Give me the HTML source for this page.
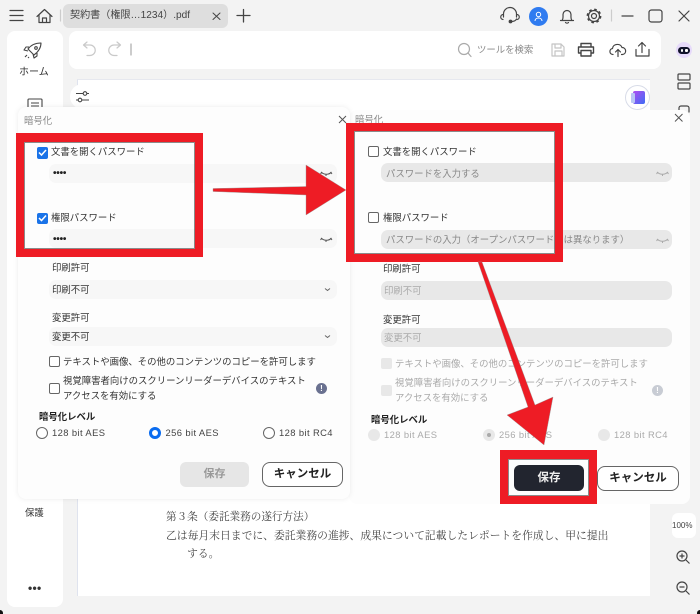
<!DOCTYPE html>
<html lang="ja"><head><meta charset="utf-8"><style>
html,body{margin:0;padding:0}
body{width:700px;height:614px;position:relative;overflow:hidden;background:#f3f3f3;font-family:"Liberation Sans","Noto Sans CJK JP",sans-serif;color:#333}
.a,.t,.b{position:absolute}
.t{font-size:9.4px;line-height:14px;white-space:nowrap;margin-top:1px}
.b{box-sizing:border-box}
.in{position:absolute;border-radius:7px;height:19px}
.l{background:#f7f7f7}.r{background:#e8e8e8}
.cb{position:absolute;box-sizing:border-box;width:11px;height:11px;border:1px solid #666;border-radius:2px;background:#fff}
.ck{background:#1a73e8;border:0;width:11.5px;height:11.5px}
.ser{font-family:"Liberation Serif","Noto Serif CJK SC",serif;font-size:10.8px;color:#444}
.inf{color:#fff;font-size:8px;font-weight:700;text-align:center;line-height:11px}
.frame{border-color:#ee1c25;border-style:solid;box-shadow:inset 0 0 0 1px rgba(90,90,90,.7)}
svg{position:absolute;overflow:visible}
</style></head><body>
<!-- background panels -->
<div class="b" style="left:7px;top:31px;width:56px;height:576px;background:#fff;border-radius:8px"></div>
<div class="b" style="left:69px;top:31px;width:592px;height:38px;background:#fff;border-radius:8px"></div>
<div class="b" style="left:77px;top:79px;width:573px;height:517px;background:#fff;border-left:1px solid #dfe3ee;border-top:1px solid #e6e8ef"></div>
<div class="b" style="left:672px;top:513px;width:24px;height:25px;background:#fff;border-radius:6px"></div>
<div class="b" style="left:63px;top:4px;width:165px;height:24px;background:#dedede;border-radius:6px"></div>

<!-- top bar -->
<svg style="left:0;top:0" width="700" height="115" fill="none" stroke="#444" stroke-width="1.2" stroke-linecap="round" stroke-linejoin="round">
<path d="M10 10.500H23M10 15.500H23M10 20.500H23"/>
<path d="M37 16.500 44.500 9.500 52 16.500M39 15v7.500H50V15M42.500 22.500v-4.500h4v4.500"/>
<path d="M60.500 10v11" stroke="#ccc"/>
<path d="M213 13l7 6.500M220 13l-7 6.500" stroke-width="1"/>
<path d="M243.500 9.500v12.500M237 15.500h13" stroke-width="1.300"/>
<path d="M503.500 17v-3a6.500 6.500 0 0 1 13 0v3M503.500 14.500a2.500 2.500 0 0 0-.5 5M516.500 14.500a2.500 2.500 0 0 1 .5 5M516.500 19c-1 2-3 2.500-5 2.500"/>
<circle cx="510.500" cy="21.500" r="1.300" fill="#444"/>
<path d="M560.500 20.500h13M562 20.500c1.500-2 1-4 1-6a4 4 0 0 1 8 0c0 2-.5 4 1 6M565.500 22.500a2 2 0 0 0 3 0"/>
<circle cx="594" cy="16" r="2.500"/><circle cx="594" cy="16" r="5.500"/><circle cx="594" cy="16" r="6.500" stroke-width="1.800" stroke-dasharray="2.550 2.550" stroke-linecap="butt"/>
<path d="M611.500 10v11" stroke="#ccc"/>
<path d="M622 16h11"/>
<rect x="649" y="10" width="13" height="12" rx="2.500"/>
<path d="M679 11l10 10M689 11l-10 10"/>
<!-- toolbar -->
<path d="M84 45h6a4.500 4.500 0 0 1 0 10.500h-3M87 42l-3.500 3 3.500 3" stroke="#c9c9c9"/>
<path d="M120 45h-6a4.500 4.500 0 0 0 0 10.500h3M117 42l3.500 3-3.500 3" stroke="#c9c9c9"/>
<path d="M131 44v11" stroke="#aaa"/>
<circle cx="464" cy="49" r="5.500" stroke="#aaa"/><path d="M468 53l3 3.500" stroke="#aaa"/>
<path d="M552 44h9l3 3v9h-12zM555 44v4h6v-4M555 56v-5h7v5" stroke="#c4c4c4"/>
<path d="M581 47v-3.500h10V47M581 53h-2.500v-6h15v6H591M581 50.500h10v5.500h-10z" stroke-width="1.400"/>
<path d="M613 54.500c-4 0-4-5.500-.5-6 .5-5 8-5.500 9.500-1 4.500 0 5 6.500.5 7h-1M618 56.500v-7M615.500 52l2.500-2.500 2.500 2.500"/>
<path d="M642 42.500v10M638.500 46l3.500-3.500 3.500 3.500M636 49.500v6.500h13v-6.500"/>
<rect x="678" y="74" width="12" height="6" rx="1"/><rect x="678" y="83" width="12" height="6" rx="1"/>
<path d="M679 112v-4a2 2 0 0 1 2-2h6a2 2 0 0 1 2 2v4"/>
</svg>
<div class="t" style="left:70px;top:8px;font-size:10.100px;color:#444">契約書（権限…1234）.pdf</div>
<div class="b" style="left:529px;top:7px;width:19px;height:19px;border-radius:50%;background:#2f7bf0"></div>
<svg style="left:529px;top:7px" width="19" height="19" fill="none" stroke="#fff" stroke-width="1"><circle cx="9.500" cy="7.500" r="2.200"/><path d="M6 14c0-4 7-4 7 0"/></svg>
<div class="t" style="left:477px;top:42px;color:#888">ツールを検索</div>
<div class="b" style="left:676px;top:42px;width:16px;height:16px;border-radius:50%;background:#e6dafa"></div>
<div class="b" style="left:678px;top:46.500px;width:12px;height:7px;border-radius:3.500px;background:#10122a"></div>
<div class="b" style="left:680.500px;top:48.500px;width:2.500px;height:3px;border-radius:1px;background:#fff"></div>
<div class="b" style="left:685px;top:48.500px;width:2.500px;height:3px;border-radius:1px;background:#fff"></div>
<div class="b" style="left:625px;top:85px;width:25px;height:25px;border-radius:50%;background:#fff;border:1px solid #d8dce8"></div>
<div class="b" style="left:633px;top:91px;width:12px;height:13px;border-radius:2px;background:linear-gradient(135deg,#b04cf0,#3f6df5)"></div>
<div class="b" style="left:631px;top:93px;width:4px;height:10px;border-radius:1px;background:#b9c6f5"></div>
<div class="b" style="left:70px;top:84px;width:25px;height:25px;border-radius:50%;background:#fff"></div>
<svg style="left:70px;top:84px" width="25" height="25" fill="none" stroke="#444" stroke-width="1.100"><path d="M6 9.500h13M6 16h13"/><circle cx="15" cy="9.500" r="1.800" fill="#fff"/><circle cx="10" cy="16" r="1.800" fill="#fff"/></svg>

<!-- left rail -->
<svg style="left:0;top:0" width="60" height="120" fill="none" stroke="#444" stroke-width="1.100" stroke-linejoin="round"><path d="M41 43c0 5-3 9-7 12l-6-6c3-4 7-6 13-6zM29 47h-3l-2 3 4 1M37 53l0 3-3 2-1-4"/><circle cx="36" cy="48" r="1.300"/><path d="M27 55l-2 2M29 57l-1 1"/><rect x="28" y="99" width="14" height="10" rx="1"/><path d="M31 103h8M31 106h8"/></svg>
<div class="t" style="left:19px;top:65px;font-size:10px;color:#333">ホーム</div>
<div class="t" style="left:25px;top:505px;color:#333">保護</div>
<div class="t" style="left:28px;top:580px;font-size:12px;font-weight:700;letter-spacing:.3px">•••</div>

<!-- document text -->
<div class="t ser" style="left:166px;top:510px;font-size:10.600px">第３条（委託業務の遂行方法）</div>
<div class="t ser" style="left:166px;top:528px">乙は毎月末日までに、委託業務の進捗、成果について記載したレポートを作成し、甲に提出</div>
<div class="t ser" style="left:187px;top:546px">する。</div>

<!-- zoom -->
<div class="t" style="left:672px;top:518px;font-size:8px;color:#444">100%</div>
<svg style="left:0;top:0" width="700" height="614" fill="none" stroke="#444" stroke-width="1.200"><circle cx="682" cy="556" r="5"/><path d="M686 560l3.500 3.500M679.500 556h5M682 553.500v5"/><circle cx="682" cy="587" r="5"/><path d="M686 591l3.500 3.500M679.500 587h5"/></svg>
<div class="b" style="left:0;top:610px;width:3px;height:4px;background:#111;border-radius:0 4px 0 0"></div>
<div class="b" style="left:697px;top:610px;width:3px;height:4px;background:#111;border-radius:4px 0 0 0"></div>

<!-- right dialog -->
<div class="b" style="left:349px;top:110px;width:341px;height:394px;background:#fdfdfd;border-radius:8px"></div>
<div class="t" style="left:355px;top:112px;color:#888">暗号化</div>
<svg style="left:0;top:0" width="700" height="130" fill="none" stroke="#555"><path d="M675 114l7.500 7.500M682.500 114l-7.500 7.500"/></svg>
<div class="cb" style="left:368px;top:146px"></div>
<div class="t" style="left:383px;top:144px">文書を開くパスワード</div>
<div class="in r" style="left:381px;top:163px;width:291px"></div>
<div class="t" style="left:386px;top:165.500px;color:#888">パスワードを入力する</div>
<div class="cb" style="left:368px;top:212px"></div>
<div class="t" style="left:383px;top:210px">権限パスワード</div>
<div class="in r" style="left:381px;top:230px;width:291px"></div>
<div class="t" style="left:386px;top:232px;color:#888">パスワードの入力（オープンパスワードとは異なります）</div>
<svg style="left:0;top:0" width="700" height="350" fill="none" stroke="#aaa"><path d="M657 172c3 3 8 3 11 0M658 172l-1.500 2M662.500 174v2M667 172l1.500 2M657 239c3 3 8 3 11 0M658 239l-1.500 2M662.500 241v2M667 239l1.500 2"/><path d="M660 289.500l2.500 2 2.500-2M660 336.500l2.500 2 2.500-2" stroke="#d8d8d8"/></svg>
<div class="t" style="left:383px;top:261px">印刷許可</div>
<div class="in r" style="left:381px;top:281px;width:291px"></div>
<div class="t" style="left:384px;top:283px;color:#aaa">印刷不可</div>
<div class="t" style="left:383px;top:312px">変更許可</div>
<div class="in r" style="left:381px;top:328px;width:291px"></div>
<div class="t" style="left:384px;top:330px;color:#aaa">変更不可</div>
<div class="a" style="left:381px;top:358px;width:11px;height:11px;background:#e8e8e8;border-radius:2px"></div>
<div class="t" style="left:395px;top:356px;color:#aaa">テキストや画像、その他のコンテンツのコピーを許可します</div>
<div class="a" style="left:381px;top:385px;width:11px;height:11px;background:#e8e8e8;border-radius:2px"></div>
<div class="t" style="left:395px;top:375px;color:#aaa">視覚障害者向けのスクリーンリーダーデバイスのテキスト</div>
<div class="t" style="left:395px;top:390px;color:#aaa">アクセスを有効にする</div>
<div class="a inf" style="left:652px;top:385px;width:11px;height:11px;border-radius:50%;background:#c8ccd4">!</div>
<div class="t" style="left:371px;top:412px;font-weight:700;color:#222">暗号化レベル</div>
<div class="a" style="left:368px;top:429px;width:12px;height:12px;border-radius:50%;background:#e8e8e8"></div>
<div class="a" style="left:483px;top:429px;width:12px;height:12px;border-radius:50%;background:#e8e8e8"></div>
<div class="a" style="left:487px;top:433px;width:4px;height:4px;border-radius:50%;background:#aaa"></div>
<div class="a" style="left:598px;top:429px;width:12px;height:12px;border-radius:50%;background:#e8e8e8"></div>
<div class="t" style="left:384px;top:427px;color:#aaa;letter-spacing:.4px">128 bit AES</div>
<div class="t" style="left:499px;top:427px;color:#aaa;letter-spacing:.4px">256 bit AES</div>
<div class="t" style="left:614px;top:427px;color:#aaa;letter-spacing:.4px">128 bit RC4</div>
<div class="b" style="left:514px;top:465px;width:70px;height:26px;background:#22252f;border-radius:6px"></div>
<div class="t" style="left:514px;top:469.500px;width:70px;text-align:center;color:#eee;font-weight:700;font-size:11.500px">保存</div>
<div class="b" style="left:597px;top:466px;width:82px;height:25px;background:#fff;border:1px solid #666;border-radius:8px"></div>
<div class="t" style="left:597px;top:470px;width:82px;text-align:center;color:#222;font-weight:700;font-size:11.500px">キャンセル</div>

<!-- left dialog -->
<div class="b" style="left:18px;top:107px;width:332px;height:392px;background:#fdfdfd;border-radius:8px;box-shadow:0 0 6px rgba(0,0,0,.08)"></div>
<div class="t" style="left:24px;top:113px;color:#888">暗号化</div>
<svg style="left:0;top:0" width="360" height="130" fill="none" stroke="#555"><path d="M339 116l7 7M346 116l-7 7"/></svg>
<div class="cb ck" style="left:36.500px;top:147px"></div>
<div class="t" style="left:51px;top:144px">文書を開くパスワード</div>
<div class="in l" style="left:49px;top:164px;width:288px"></div>
<div class="t" style="left:53px;top:166px;font-weight:700;font-size:10px;letter-spacing:-.2px;color:#222">••••</div>
<div class="cb ck" style="left:36.500px;top:212.500px"></div>
<div class="t" style="left:51px;top:210px">権限パスワード</div>
<div class="in l" style="left:49px;top:229px;width:288px"></div>
<div class="t" style="left:53px;top:232px;font-weight:700;font-size:10px;letter-spacing:-.2px;color:#222">••••</div>
<svg style="left:0;top:0" width="360" height="260" fill="none"><path d="M39 152.500l2.500 2.500 4.500-5M39 218l2.500 2.500 4.500-5" stroke="#fff" stroke-width="1.500"/><path d="M321 172c3 3 8 3 10.500 0M322 172l-1.500 2M326 174v2M330.500 172l1.500 2M321 238c3 3 8 3 10.500 0M322 238l-1.500 2M326 240v2M330.500 238l1.500 2" stroke="#555"/></svg>
<div class="t" style="left:52px;top:260px">印刷許可</div>
<div class="in l" style="left:49px;top:280px;width:288px"></div>
<div class="t" style="left:52px;top:282px">印刷不可</div>
<div class="t" style="left:52px;top:310px">変更許可</div>
<div class="in l" style="left:49px;top:327px;width:288px"></div>
<div class="t" style="left:52px;top:329px">変更不可</div>
<svg style="left:0;top:0" width="360" height="350" fill="none" stroke="#666"><path d="M325 288.500l2.500 2 2.500-2M325 335.500l2.500 2 2.500-2"/></svg>
<div class="cb" style="left:49px;top:356px"></div>
<div class="t" style="left:63px;top:354px">テキストや画像、その他のコンテンツのコピーを許可します</div>
<div class="cb" style="left:49px;top:383px"></div>
<div class="t" style="left:63px;top:373px">視覚障害者向けのスクリーンリーダーデバイスのテキスト</div>
<div class="t" style="left:63px;top:388px">アクセスを有効にする</div>
<div class="a inf" style="left:316px;top:383px;width:11px;height:11px;border-radius:50%;background:#6a7190">!</div>
<div class="t" style="left:39px;top:409px;font-weight:700;color:#222">暗号化レベル</div>
<div class="a" style="left:36px;top:427px;width:12px;height:12px;box-sizing:border-box;border-radius:50%;border:1px solid #666;background:#fff"></div>
<div class="a" style="left:149px;top:427px;width:12px;height:12px;box-sizing:border-box;border-radius:50%;border:3.500px solid #0a6cf0;background:#fff"></div>
<div class="a" style="left:263px;top:427px;width:12px;height:12px;box-sizing:border-box;border-radius:50%;border:1px solid #666;background:#fff"></div>
<div class="t" style="left:52px;top:424.500px;letter-spacing:.4px;color:#444">128 bit AES</div>
<div class="t" style="left:165.500px;top:424.500px;letter-spacing:.4px;color:#444">256 bit AES</div>
<div class="t" style="left:279px;top:424.500px;letter-spacing:.4px;color:#444">128 bit RC4</div>
<div class="b" style="left:180px;top:462px;width:69px;height:25px;background:#e6e6e6;border-radius:6px"></div>
<div class="t" style="left:180px;top:466px;width:69px;text-align:center;color:#999;font-weight:700;font-size:11px">保存</div>
<div class="b" style="left:262px;top:462px;width:81px;height:25px;background:#fff;border:1px solid #666;border-radius:8px"></div>
<div class="t" style="left:262px;top:466px;width:81px;text-align:center;color:#222;font-weight:700;font-size:11.500px">キャンセル</div>

<!-- red annotations -->
<div class="b frame" style="left:16px;top:133px;width:187px;height:124px;border-width:9px 8px 8px 8px"></div>
<div class="b frame" style="left:346px;top:123px;width:217px;height:139px;border-width:8px"></div>
<div class="b frame" style="left:500px;top:450px;width:97px;height:54px;border-width:9px 8px 8px 8px"></div>
<svg style="left:0;top:0" width="700" height="614"><polygon points="213,188.500 306,186.500 306,165 346,190 306,215 306,195 213,191.500" fill="#ee1c25" stroke="#999" stroke-width=".4"/><polygon points="478,262 482,262 535,405 553,397 544,445 507,415 528,407" fill="#ee1c25" stroke="#999" stroke-width=".4"/></svg>
</body></html>
